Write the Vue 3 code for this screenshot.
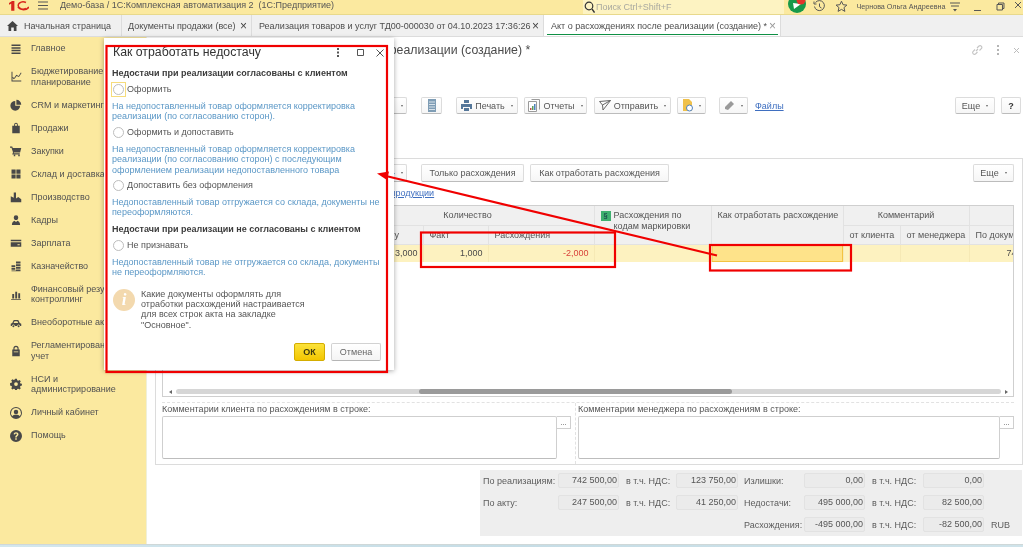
<script setup>
const tabs = [
  { title: "Документы продажи (все)", cls: "t2" },
  { title: "Реализация товаров и услуг ТД00-000030 от 04.10.2023 17:36:26", cls: "t3" },
  { title: "Акт о расхождениях после реализации (создание) *", cls: "t4 active" },
]

const menu = [
  { label: "Главное", d: "M2 2h12v2H2zM2 5.500h12v2H2zM2 9h12v2H2zM2 12.500h12v2H2z" },
  { label: "Бюджетирование и планирование", d: "M2 1h1.300v11.700H15V14H2zM5 10l3.500-5 3 1.500 3-4.500 .9 .7-3.500 5.300-3-1.500-3 4.200zM4 8l2 2-1 1-2-2z" },
  { label: "CRM и маркетинг", d: "M7 2.500V9h6.500A6.500 6.500 0 1 1 7 2.500zM8.500 1A6.500 6.500 0 0 1 15 7.500H8.500z" },
  { label: "Продажи", d: "M3 5h2.500V3.500a2.500 2.500 0 0 1 5 0V5H13v10H3zM6.700 5h2.600V3.500a1.300 1.300 0 0 0-2.600 0z" },
  { label: "Закупки", d: "M0 2h3l.7 2H15l-1.500 6H5.200l-.3 1H13v1.500H3l1-3L2 3.500H0z M5 13h2v2H5zM11 13h2v2h-2z" },
  { label: "Склад и доставка", d: "M2 2h5.500v5.500H2zM8.500 2H14v5.500H8.500zM2 8.500h5.500V14H2zM8.500 8.500H14V14H8.500z" },
  { label: "Производство", d: "M1 15V7l4 2V2h3v8l3-2 4 3v4z" },
  { label: "Кадры", d: "M8 1.500a3 3 0 0 1 3 3c0 2-1.300 3.500-3 3.500S5 6.500 5 4.500a3 3 0 0 1 3-3zM2.500 14.500c0-3.500 2-5 3.500-5.500l2 1.500L10 9c1.500.5 3.500 2 3.500 5.500z" },
  { label: "Зарплата", d: "M1 3.500h14v2H1zM1 7h14v6H1zM10 9.500h3V11h-3z" },
  { label: "Казначейство", d: "M8 2h6v2.500H8zM8 5.500h6V8H8zM8 9h6v2.500H8zM2 7h5v2.500H2zM2 10.500h5V13H2zM8 12.500h6V15H2v-1h6z" },
  { label: "Финансовый результат и контроллинг", d: "M3 8h2.500v6H3zM7 5h2.500v9H7zM11 7h2.500v7H11zM1.500 14.500h13v1h-13z" },
  { label: "Внеоборотные активы", d: "M1 12V9l2-1 2-4h6l2 4 2 1v3h-1.500a2 2 0 0 0-4 0h-3a2 2 0 0 0-4 0zM6 5.500 4.800 8H11L9.800 5.500zM4.500 11a1.300 1.300 0 1 1 0 2.600 1.300 1.300 0 0 1 0-2.600zM11.500 11a1.300 1.300 0 1 1 0 2.600 1.300 1.300 0 0 1 0-2.600z" },
  { label: "Регламентированный учет", d: "M3 6h1.500V4.500a3.500 3.500 0 0 1 7 0V6H13v9H3zM6 6h4V4.500a2 2 0 0 0-4 0zM5 8.500v1.300h6V8.500z" },
  { label: "НСИ и администрирование", d: "M6.800 1h2.400l.4 2 1.400.6 1.700-1.100 1.700 1.700-1.100 1.700.6 1.400 2 .4v2.400l-2 .4-.6 1.400 1.100 1.700-1.700 1.700-1.700-1.100-1.400.6-.4 2H6.800l-.4-2-1.400-.6-1.700 1.100-1.700-1.700 1.100-1.700-.6-1.400-2-.4V6.800l2-.4.6-1.400-1.100-1.700 1.700-1.700L5 2.700l1.400-.6zM8 5.500a2.500 2.500 0 1 0 0 5 2.500 2.500 0 0 0 0-5z" },
  { label: "Личный кабинет", d: "M8 0a8 8 0 1 1 0 16A8 8 0 0 1 8 0zm0 1.300a6.700 6.700 0 0 0-5 11.100c1-1.400 2.800-2 5-2s4 .6 5 2A6.700 6.700 0 0 0 8 1.300zM8 3.500a3 3 0 1 1 0 6 3 3 0 0 1 0-6z" },
  { label: "Помощь", d: "M8 0a8 8 0 1 1 0 16A8 8 0 0 1 8 0zM7 11v2h2v-2zM8 3C6.300 3 5 4 4.800 5.800l1.800.3C6.700 5.200 7.200 4.700 8 4.700c.8 0 1.300.4 1.300 1.100 0 1.300-2.300 1.500-2.300 3.900V10h2v-.3c0-1.500 2.300-1.800 2.300-4C11.300 4 9.900 3 8 3z" },
]

const shortage = [
  {
    heading: "Недостачи при реализации согласованы с клиентом",
    options: [
      { label: "Оформить", focused: true, text: ["На недопоставленный товар оформляется корректировка", "реализации (по согласованию сторон)."] },
      { label: "Оформить и допоставить", text: ["На недопоставленный товар оформляется корректировка", "реализации (по согласованию сторон) с последующим", "оформлением реализации недопоставленного товара"] },
      { label: "Допоставить без оформления", text: ["Недопоставленный товар отгружается со склада, документы не", "переоформляются."] },
    ],
  },
  {
    heading: "Недостачи при реализации не согласованы с клиентом",
    options: [
      { label: "Не признавать", text: ["Недопоставленный товар не отгружается со склада, документы", "не переоформляются."] },
    ],
  },
]

const totals = [
  ["По реализациям:", "742 500,00", "в т.ч. НДС:", "123 750,00", "Излишки:", "0,00", "в т.ч. НДС:", "0,00", ""],
  ["По акту:", "247 500,00", "в т.ч. НДС:", "41 250,00", "Недостачи:", "495 000,00", "в т.ч. НДС:", "82 500,00", ""],
  ["", "", "", "", "Расхождения:", "-495 000,00", "в т.ч. НДС:", "-82 500,00", "RUB"],
]
</script>

<template>
  <div class="app">
    <header class="topbar">
      <svg class="logo" width="20" height="10" viewBox="0 0 20 10">
        <path d="M0 3 3 1v8h1.600V0" fill="none" stroke="#d8261c" stroke-width="1.600" />
        <path d="M17 7.500a5 3.600 0 1 1 0-6M20 6a6 4.500 0 0 1-11 0" fill="none" stroke="#d8261c" stroke-width="1.500" />
      </svg>
      <svg class="burger" width="10" height="9" viewBox="0 0 10 9"><path d="M0 1h10M0 4.500h10M0 8h10" stroke="#555" stroke-width="1" /></svg>
      <span class="app-title">Демо-база / 1С:Комплексная автоматизация 2 &nbsp;(1С:Предприятие)</span>
      <div class="search">
        <svg width="11" height="13" viewBox="0 0 11 13"><circle cx="5" cy="5" r="3.800" fill="none" stroke="#333" stroke-width="1.200" /><path d="M8 8l2.500 3.500" stroke="#333" stroke-width="1.300" /></svg>
        <span>Поиск Ctrl+Shift+F</span>
      </div>
      <div class="notify">
        <svg width="20" height="14" viewBox="0 0 20 14">
          <circle cx="9" cy="4" r="9" fill="#17994a" />
          <path d="M5 3l8 1-7 5z" fill="#fff" />
          <circle cx="13" cy="0" r="4.500" fill="#e2352c" />
        </svg>
      </div>
      <svg class="top-ico" width="13" height="13" viewBox="0 0 13 13"><path d="M2.500 2.500A5 5 0 1 1 1.500 6.500M1 1.500v2.500h2.500M6.500 3.500v3.200l2 1.300" fill="none" stroke="#555" stroke-width="1" /></svg>
      <svg class="top-ico star" width="13" height="13" viewBox="0 0 13 13"><path d="M6.500 1.200l1.600 3.500 3.800.4-2.900 2.500.9 3.800-3.400-2-3.400 2 .9-3.800L1.100 5.100l3.800-.4z" fill="none" stroke="#555" stroke-width="1" /></svg>
      <span class="user">Чернова Ольга Андреевна</span>
      <svg class="top-menu" width="10" height="10" viewBox="0 0 10 10"><path d="M0 1h10M1 4h8" stroke="#555" stroke-width="1" /><path d="M3 7h4L5 9.500z" fill="#555" /></svg>
      <svg class="win-min" width="8" height="8" viewBox="0 0 8 8"><path d="M0 7.500h7" stroke="#555" /></svg>
      <svg class="win-max" width="9" height="9" viewBox="0 0 9 9"><path d="M1 2.500h5.500V8H1zM2.500 2.500V1H8v5.500H6.500" fill="none" stroke="#555" /></svg>
      <svg class="win-close" width="8" height="8" viewBox="0 0 8 8"><path d="M0 0l6 6M6 0L0 6" stroke="#555" /></svg>
    </header>

    <nav class="tabs">
      <div class="tab t1">
        <svg width="11" height="10" viewBox="0 0 11 10"><path d="M5.500 0 11 5H9.500v5H6.800V6.500H4.200V10H1.500V5H0z" fill="#444" /></svg>
        <span>Начальная страница</span>
      </div>
      <div v-for="tab in tabs" :key="tab.title" class="tab" :class="tab.cls">
        <span class="tab-name">{{ tab.title }}</span>
        <span class="tab-x">×</span>
      </div>
    </nav>

    <div class="body">
      <aside class="sidebar">
        <div v-for="item in menu" :key="item.label" class="side-item">
          <svg class="side-ico" width="12" height="12" viewBox="0 0 16 16"><path :d="item.d" fill="#484848" fill-rule="evenodd" /></svg>
          <span class="side-label">{{ item.label }}</span>
        </div>
      </aside>

      <main class="main">
        <div class="title-row">
          <h1>Акт о расхождениях после реализации (создание) *</h1>
          <div class="title-icons">
            <svg width="12" height="12" viewBox="0 0 12 12"><path d="M5 7l2-2M4 5.500 2 7.500a1.800 1.800 0 0 0 2.500 2.500l2-2M6 4l2-2a1.800 1.800 0 0 1 2.500 2.500l-2 2" fill="none" stroke="#c4c4c4" stroke-width="1.100" /></svg>
            <svg width="4" height="10" viewBox="0 0 4 10"><path d="M1 0h2v2H1zM1 4h2v2H1zM1 8h2v2H1z" fill="#b5b5b5" /></svg>
            <svg width="7" height="7" viewBox="0 0 7 7"><path d="M1 1l5 5M6 1L1 6" stroke="#bcbcbc" /></svg>
          </div>
        </div>

        <div class="toolbar">
          <button class="btn b-first"><i class="caret"></i></button>
          <button class="btn b-list">
            <svg width="8" height="13" viewBox="0 0 8 13"><path d="M0 0h8v13H0z" fill="#7f9db5" /><path d="M1 3h6M1 5.500h6M1 8h6M1 10.500h6" stroke="#d8e2ea" /></svg>
          </button>
          <button class="btn b-print">
            <svg width="11" height="11" viewBox="0 0 11 11"><path d="M3 0h5v3H3zM0 4h11v5H9V7H2v2H0zM3 8h5v3H3z" fill="#55779a" /></svg>
            Печать<i class="caret"></i>
          </button>
          <button class="btn b-rep">
            <svg width="12" height="13" viewBox="0 0 12 13"><path d="M0.500 2.500h8v10h-8z" fill="#fff" stroke="#9a9a9a" /><path d="M3.500 .5h8v10" fill="none" stroke="#9a9a9a" /><path d="M2 9h1.500v2H2z" fill="#c0504d" /><path d="M4 7h1.500v4H4z" fill="#5a9e5a" /><path d="M6 5h1.500v6H6z" fill="#4f81bd" /></svg>
            Отчеты<i class="caret"></i>
          </button>
          <button class="btn b-send">
            <svg width="12" height="11" viewBox="0 0 12 11"><path d="M.5 1.500 11.500 .5 4 10 3.500 5zM3.500 5l8-4.500" fill="none" stroke="#666" /></svg>
            Отправить<i class="caret"></i>
          </button>
          <button class="btn b-doc">
            <svg width="10" height="13" viewBox="0 0 10 13"><path d="M0 0h6l3 3v9H0z" fill="#f0c14b" /><circle cx="6.500" cy="9" r="3" fill="#fff" stroke="#4f81bd" /></svg>
            <i class="caret"></i>
          </button>
          <button class="btn b-clip">
            <svg width="11" height="11" viewBox="0 0 11 11"><path d="M1 7 7 1l3 3-6 6-3-1z" fill="#9a9a9a" /></svg>
            <i class="caret"></i>
          </button>
          <a class="link files">Файлы</a>
          <button class="btn b-more">Еще<i class="caret"></i></button>
          <button class="btn b-help"><b>?</b></button>
        </div>

        <section class="panel">
          <div class="panel-bar">
            <button class="btn b-arrow">
              <svg width="9" height="11" viewBox="0 0 9 11"><path d="M3 0h3v5h3L4.500 11 0 5h3z" fill="#4f8fd0" /></svg>
              <i class="caret"></i>
            </button>
            <button class="btn b-only">Только расхождения</button>
            <button class="btn b-how">Как отработать расхождения</button>
            <button class="btn b-more2">Еще<i class="caret"></i></button>
          </div>
          <div class="panel-link"><a class="link">Расхождения по продукции</a></div>

          <div class="grid-wrap">
            <div class="grid-scroll">
              <table class="grid">
                <colgroup>
                  <col class="c-name" /><col class="c-doc" /><col class="c-fact" /><col class="c-diff" />
                  <col class="c-codes" /><col class="c-how" /><col class="c-client" /><col class="c-manager" /><col class="c-bydoc" />
                </colgroup>
                <thead>
                  <tr>
                    <th rowspan="2">Номенклатура</th>
                    <th colspan="3" class="center">Количество</th>
                    <th rowspan="2" class="top">
                      <span class="code-ico">§</span>Расхождения по<br /><span class="code-second">кодам маркировки</span>
                    </th>
                    <th rowspan="2" class="top how-head">Как отработать расхождение</th>
                    <th colspan="2" class="center">Комментарий</th>
                    <th></th>
                  </tr>
                  <tr>
                    <th class="doc-head">По документу</th>
                    <th>Факт</th>
                    <th>Расхождения</th>
                    <th>от клиента</th>
                    <th>от менеджера</th>
                    <th>По документу</th>
                  </tr>
                </thead>
                <tbody>
                  <tr>
                    <td></td>
                    <td class="num">3,000</td>
                    <td class="num">1,000</td>
                    <td class="num minus">-2,000</td>
                    <td></td>
                    <td class="cell-active"></td>
                    <td></td>
                    <td></td>
                    <td class="num-left">742 500,00</td>
                  </tr>
                </tbody>
              </table>
            </div>
            <div class="hscroll">
              <i class="arr-l"></i>
              <div class="track"><div class="thumb"></div></div>
              <i class="arr-r"></i>
            </div>
          </div>

          <div class="comments">
            <div class="comment">
              <label>Комментарии клиента по расхождениям в строке:</label>
              <div class="comment-field"><div class="area"></div><button class="more-btn">...</button></div>
            </div>
            <div class="comment second">
              <label>Комментарии менеджера по расхождениям в строке:</label>
              <div class="comment-field"><div class="area"></div><button class="more-btn">...</button></div>
            </div>
          </div>
        </section>

        <section class="totals">
          <template v-for="(row, r) in totals" :key="r">
            <template v-for="(val, c) in row" :key="c">
              <div v-if="c % 2 === 1 && c < 8 && val" class="total-field">{{ val }}</div>
              <div v-else-if="c % 2 === 1 && c < 8"></div>
              <div v-else class="total-label" :class="{ rub: c === 8 }">{{ val }}</div>
            </template>
          </template>
        </section>
      </main>
    </div>
    <div class="strip"></div>

    <div class="modal">
      <div class="modal-head">
        <h2>Как отработать недостачу</h2>
        <svg width="3" height="9" viewBox="0 0 3 9"><path d="M0 0h2v2H0zM0 3.500h2v2H0zM0 7h2v2H0z" fill="#555" /></svg>
        <svg width="7" height="7" viewBox="0 0 7 7"><path d="M.5 .5h6v6h-6z" fill="none" stroke="#555" /></svg>
        <svg width="8" height="8" viewBox="0 0 8 8"><path d="M.5 .5l7 7M7.500 .5l-7 7" stroke="#555" /></svg>
      </div>
      <template v-for="group in shortage" :key="group.heading">
        <div class="group-head">{{ group.heading }}</div>
        <template v-for="opt in group.options" :key="opt.label">
          <div class="radio-row">
            <span class="radio-wrap" :class="{ focused: opt.focused }"><span class="radio"></span></span>
            <span>{{ opt.label }}</span>
          </div>
          <p class="hint">
            <span v-for="line in opt.text" :key="line">{{ line }}<br /></span>
          </p>
        </template>
      </template>
      <div class="info">
        <div class="info-ico">i</div>
        <p>Какие документы оформлять для<br />отработки расхождений настраивается<br />для всех строк акта на закладке<br />"Основное".</p>
      </div>
      <div class="modal-btns">
        <button class="btn-ok">ОК</button>
        <button class="btn-cancel">Отмена</button>
      </div>
    </div>

    <svg class="marks" width="1023" height="547" viewBox="0 0 1023 547">
      <g fill="none" stroke="#f00000" stroke-width="2.200">
        <rect x="106.500" y="46" width="280.500" height="326" />
        <rect x="421" y="232.500" width="194" height="34.500" />
        <rect x="710" y="245" width="141" height="25.500" />
        <path d="M717 255.500 386 176" />
      </g>
      <path d="M377 173.500 389 171.500 387 180z" fill="#f00000" />
    </svg>
  </div>
</template>

<style>
html, body {
  margin: 0;
  overflow: hidden;
  background: #fff;
}
</style>

<style scoped>
.app {
  position: relative;
  width: 1023px;
  height: 547px;
  overflow: hidden;
  display: flex;
  flex-direction: column;
  font-family: "Liberation Sans", Arial, sans-serif;
  font-size: 9px;
  color: #4f4f4f;
  background: #fff;
  filter: blur(0.4px);
}

.topbar {
  flex: none;
  height: 14px;
  display: flex;
  align-items: center;
  background: #fbe99f;
  border-bottom: 1px solid #e8d98c;
  overflow: hidden;
  color: #555;
}
.logo { margin-left: 9px; margin-top: -3px; }
.burger { margin-left: 9px; margin-top: -3px; }
.app-title { margin-left: 12px; width: 294px; margin-top: -4px; white-space: nowrap; }
.search {
  margin-left: 230px;
  width: 202px;
  height: 14px;
  background: #fdf3c2;
  display: flex;
  align-items: center;
  gap: 1px;
  padding-left: 1px;
  box-sizing: border-box;
  color: #a9a9a0;
}
.notify { margin-left: 4px; height: 14px; width: 19px; }
.top-ico { margin-left: 6px; margin-top: -1px; }
.star { margin-left: 9px; }
.user { margin-left: 8px; width: 90px; font-size: 7.200px; white-space: nowrap; margin-top: -2px; }
.top-menu { margin-left: 4px; margin-top: -1px; }
.win-min { margin-left: 14px; }
.win-max { margin-left: 14px; margin-top: -2px; }
.win-close { margin-left: 10px; margin-top: -2px; }

.tabs {
  flex: none;
  height: 21px;
  display: flex;
  background: #f0f0f0;
  border-bottom: 1px solid #dcdcdc;
}
.tab {
  display: flex;
  align-items: center;
  box-sizing: border-box;
  height: 21px;
  padding-left: 6px;
  border-right: 1px solid #dcdcdc;
  white-space: nowrap;
  color: #4d4d4d;
}
.t1 { width: 122px; padding-left: 7px; gap: 6px; }
.t2 { width: 130px; }
.t3 { width: 292px; padding-left: 7px; }
.t4 { width: 237px; padding-left: 7px; background: #fff; position: relative; }
.t4::after {
  content: "";
  position: absolute;
  left: 3px;
  right: 2px;
  bottom: 1px;
  height: 1px;
  background: #0f9045;
}
.tab-name { flex: 1; }
.tab-x { margin-right: 4px; font-size: 12px; color: #444; }
.active .tab-x { color: #999; }

.body {
  flex: 1;
  display: flex;
  min-height: 0;
}

.sidebar {
  flex: none;
  width: 147px;
  box-sizing: border-box;
  background: #fbe99f;
  border-right: 1px solid #f0f0d8;
}
.side-item {
  min-height: 23px;
  display: flex;
  align-items: center;
}
.side-ico { flex: none; margin-left: 10px; }
.side-label {
  margin-left: 9px;
  width: 106px;
  line-height: 10.500px;
  padding: 6.250px 0;
  color: #525252;
}

.main {
  flex: 1;
  min-width: 0;
  display: flex;
  flex-direction: column;
  background: #fff;
}
.title-row {
  height: 26px;
  display: flex;
  align-items: center;
}
h1 {
  margin: 0 0 0 88px;
  font-size: 12.300px;
  font-weight: normal;
  color: #4a4a4a;
  white-space: nowrap;
}
.title-icons {
  margin-left: auto;
  margin-right: 3px;
  display: flex;
  align-items: center;
  gap: 13px;
}

.toolbar {
  margin-top: 34px;
  height: 17px;
  display: flex;
  align-items: stretch;
}

.btn {
  box-sizing: border-box;
  display: flex;
  align-items: center;
  justify-content: center;
  gap: 3px;
  margin: 0;
  padding: 0;
  background: linear-gradient(#fff, #f6f6f6);
  border: 1px solid #dcdcdc;
  border-bottom-color: #bcbcbc;
  border-radius: 2px;
  font: inherit;
  color: #555;
  white-space: nowrap;
}
.caret {
  display: inline-block;
  width: 0;
  height: 0;
  margin-left: 3px;
  border-left: 1.500px solid transparent;
  border-right: 1.500px solid transparent;
  border-top: 2px solid #666;
}
.b-first { margin-left: 230px; width: 30px; justify-content: flex-end; padding-right: 3px; }
.b-list { margin-left: 14px; width: 21px; }
.b-print { margin-left: 14px; width: 62px; }
.b-rep { margin-left: 6px; width: 63px; }
.b-send { margin-left: 7px; width: 77px; }
.b-doc { margin-left: 6px; width: 29px; }
.b-clip { margin-left: 13px; width: 29px; }
.link {
  color: #3f6fc0;
  text-decoration: underline;
}
.files { margin-left: 7px; align-self: center; }
.b-more { margin-left: auto; width: 40px; }
.b-help { margin-left: 6px; margin-right: 2px; width: 20px; color: #333; }

.panel {
  margin-top: 44px;
  height: 307px;
  box-sizing: border-box;
  margin-left: 8px;
  border: 1px solid #dcdcdc;
  padding: 5px 8px 0 6px;
  display: flex;
  flex-direction: column;
}
.panel-bar {
  height: 18px;
  display: flex;
  align-items: stretch;
}
.b-arrow { margin-left: 220px; width: 25px; }
.b-only { margin-left: 14px; width: 103px; }
.b-how { margin-left: 6px; width: 139px; }
.b-more2 { margin-left: auto; width: 41px; }
.panel-link {
  height: 24px;
  display: flex;
  align-items: center;
  padding-left: 158px;
  margin-top: -1px;
  white-space: nowrap;
}

.grid-wrap {
  height: 192px;
  flex: none;
  box-sizing: border-box;
  border: 1px solid #cfcfcf;
  display: flex;
  flex-direction: column;
}
.grid-scroll {
  flex: 1;
  overflow: hidden;
  min-height: 0;
}
.grid {
  width: 876px;
  table-layout: fixed;
  border-collapse: collapse;
}
.c-name { width: 178px; }
.c-doc { width: 82px; }
.c-fact { width: 65px; }
.c-diff { width: 106px; }
.c-codes { width: 117px; }
.c-how { width: 132px; }
.c-client { width: 57px; }
.c-manager { width: 69px; }
.c-bydoc { width: 83px; }
th {
  height: 19px;
  padding: 0 6px;
  font-weight: normal;
  text-align: left;
  background: #f0f0f0;
  border-right: 1px solid #e2e2e2;
  border-bottom: 1px solid #e2e2e2;
  color: #555;
  white-space: nowrap;
  overflow: hidden;
  box-sizing: border-box;
}
th.center { text-align: center; }
th.top { vertical-align: top; padding-top: 4px; line-height: 10.500px; }
th.how-head { text-align: center; }
th.doc-head { padding-left: 0; }
.code-ico {
  display: inline-block;
  width: 10px;
  height: 10px;
  margin-right: 3px;
  background: #3eb06f;
  color: #134;
  text-align: center;
  font-size: 8px;
  line-height: 10px;
}
.code-second { margin-left: 13px; }
td {
  height: 18px;
  padding: 0 5px;
  background: #fdf2c0;
  border-right: 1px solid #f6e9b5;
  color: #4a4a4a;
  box-sizing: border-box;
  white-space: nowrap;
  overflow: hidden;
}
td.num { text-align: right; }
td.minus { color: #d8423c; }
td.num-left { text-align: right; padding-right: 0; }
td.cell-active {
  background: #fee38a;
  box-shadow: inset -1px -1px 0 #f3c341, inset 1px 1px 0 #f9d468;
}

.hscroll {
  flex: none;
  height: 9px;
  display: flex;
  align-items: center;
}
.track {
  flex: 1;
  height: 5px;
  margin: 0 4px;
  background: #d6d6d6;
  border-radius: 3px;
}
.thumb {
  margin-left: 243px;
  width: 313px;
  height: 5px;
  border-radius: 3px;
  background: #9a9a9a;
}
.arr-l, .arr-r {
  width: 0;
  height: 0;
  border-top: 2px solid transparent;
  border-bottom: 2px solid transparent;
}
.arr-l { margin-left: 6px; border-right: 3px solid #666; }
.arr-r { margin-right: 5px; border-left: 3px solid #666; }

.comments {
  margin-top: 5px;
  border-top: 1px dashed #e2e2e2;
  display: flex;
  flex: 1;
  min-height: 0;
}
.comment { width: 413px; padding-top: 1px; }
.comment .comment-field { margin-right: 4px; }
.comment.second {
  width: auto;
  flex: 1;
  border-left: 1px dashed #e2e2e2;
  padding-left: 2px;
}
.comment.second .comment-field { margin-right: 0; }
.comment label {
  display: block;
  height: 12px;
  line-height: 11px;
  color: #555;
}
.comment-field { display: flex; align-items: flex-start; }
.area {
  flex: 1;
  height: 43px;
  box-sizing: border-box;
  background: #fff;
  border: 1px solid #cfcfcf;
  border-bottom-color: #bdbdbd;
  border-radius: 2px;
}
.more-btn {
  width: 14px;
  height: 13px;
  margin: 0;
  padding: 0;
  background: #fff;
  border: 1px solid #cfcfcf;
  border-left: none;
  font-size: 8px;
  line-height: 6px;
  color: #555;
}

.totals {
  margin: 5px 1px 0 333px;
  height: 66px;
  box-sizing: border-box;
  padding: 3px 0 3px 3px;
  background: #eeeeee;
  display: grid;
  grid-template-columns: 75px 61px 57px 62px 66px 61px 58px 61px 1fr;
  grid-template-rows: 15px 15px 15px;
  row-gap: 7px;
}
.total-label {
  align-self: center;
  white-space: nowrap;
  color: #5c5c5c;
}
.total-label:nth-child(9n+3), .total-label:nth-child(9n+7) { padding-left: 7px; }
.total-label:nth-child(9n+5) { padding-left: 6px; }
.rub { padding-left: 7px; }
.total-field {
  background: #ebebeb;
  border: 1px solid #e2e2e2;
  border-radius: 2px;
  box-sizing: border-box;
  text-align: right;
  line-height: 13px;
  padding-right: 1px;
  color: #555;
  white-space: nowrap;
}

.strip {
  flex: none;
  height: 3px;
  background: linear-gradient(90deg, #d3e7ee, #c6dde6 50%, #cfe3ea);
  border-top: 1px solid #cfd8d8;
  box-sizing: border-box;
}

.modal {
  position: absolute;
  left: 104px;
  top: 38px;
  width: 290px;
  height: 332px;
  box-sizing: border-box;
  padding: 0 8px;
  background: #fff;
  box-shadow: 0 1px 5px rgba(0, 0, 0, 0.35);
  line-height: 10.400px;
}
.modal-head {
  height: 24px;
  display: flex;
  align-items: center;
  padding-top: 5px;
  box-sizing: border-box;
}
.modal-head h2 {
  margin: 0 0 0 1px;
  flex: 1;
  font-size: 12.300px;
  font-weight: normal;
  color: #333;
}
.modal-head svg:nth-of-type(1) { margin-right: 17px; }
.modal-head svg:nth-of-type(2) { margin-right: 12px; }
.modal-head svg:nth-of-type(3) { margin-right: 2px; }
.group-head {
  margin-top: 5px;
  height: 12px;
  line-height: 12px;
  font-weight: bold;
  color: #3c3c3c;
}
.radio-row {
  height: 15px;
  display: flex;
  align-items: center;
  gap: 1px;
  color: #555;
  margin-top: 3px;
}
.radio-wrap {
  box-sizing: border-box;
  width: 15px;
  height: 15px;
  display: flex;
  align-items: center;
  justify-content: center;
  border: 1px solid transparent;
  margin-left: -1px;
}
.radio-wrap.focused { border-color: #f6dc7c; }
.radio {
  box-sizing: border-box;
  width: 11px;
  height: 11px;
  border: 1px solid #bdbdbd;
  border-radius: 50%;
  background: #fff;
}
.hint {
  margin: 4px 0 0;
  color: #5a97c6;
  white-space: nowrap;
}
.info {
  margin-top: 11px;
  display: flex;
  align-items: flex-start;
  gap: 4px;
}
.info-ico {
  flex: none;
  width: 22px;
  height: 22px;
  margin: 0 2px 0 1px;
  border-radius: 50%;
  background: #f3d9ae;
  color: #fff;
  font: italic bold 17px/22px "Liberation Serif", serif;
  text-align: center;
}
.info p {
  margin: 0;
  color: #555;
  white-space: nowrap;
}
.modal-btns {
  margin-top: 13px;
  display: flex;
  justify-content: flex-end;
  gap: 6px;
  padding-right: 5px;
}
.btn-ok, .btn-cancel {
  height: 18px;
  margin: 0;
  padding: 0;
  border-radius: 2px;
  font: inherit;
  box-sizing: border-box;
}
.btn-ok {
  width: 31px;
  background: linear-gradient(#fbe23a, #f3c600);
  border: 1px solid #d4ad00;
  font-weight: bold;
  color: #3e3a10;
}
.btn-cancel {
  width: 50px;
  background: linear-gradient(#fff, #f4f4f4);
  border: 1px solid #d2d2d2;
  border-bottom-color: #b5b5b5;
  color: #666;
}

.marks {
  position: absolute;
  left: 0;
  top: 0;
  pointer-events: none;
}
</style>
